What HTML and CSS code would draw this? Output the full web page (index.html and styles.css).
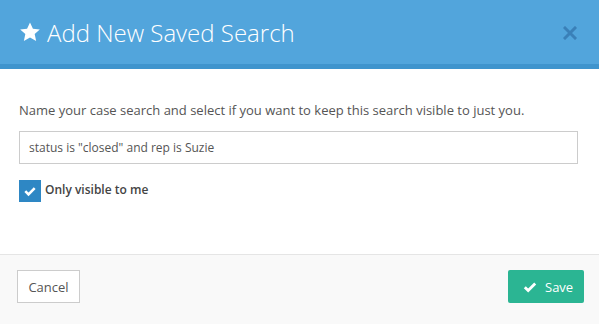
FILE: index.html
```html
<!DOCTYPE html>
<html>
<head>
<meta charset="utf-8">
<link rel="stylesheet" href="styles.css">
</head>
<body>
<div class="modal">
  <div class="header">
    <div class="title">
      <svg class="star" viewBox="0 0 24 24" width="22" height="22"><path fill="#fff" d="M12 1.5l3.2 6.9 7.5.8-5.6 5.1 1.6 7.4L12 17.9l-6.7 3.8 1.6-7.4-5.6-5.1 7.5-.8z"/></svg>
      <span>Add New Saved Search</span>
    </div>
    <svg class="close" viewBox="0 0 14 14" width="14" height="14"><path d="M2 2l10 10M12 2L2 12" stroke="#3a80b8" stroke-width="3" stroke-linecap="square"/></svg>
  </div>
  <div class="body">
    <p class="desc">Name your case search and select if you want to keep this search visible to just you.</p>
    <div class="input">status is "closed" and rep is Suzie</div>
    <label class="check">
      <span class="box"><svg viewBox="0 0 14 14" width="14" height="14"><path d="M2.3 7.2l3.2 3.2 6.2-6.2" fill="none" stroke="#fff" stroke-width="2.6"/></svg></span>
      <span class="lbl">Only visible to me</span>
    </label>
  </div>
  <div class="footer">
    <button class="btn cancel">Cancel</button>
    <button class="btn save"><svg viewBox="0 0 14 14" width="14" height="14"><path d="M1.8 7.2l3.4 3.4 7-7" fill="none" stroke="#fff" stroke-width="2.8"/></svg>Save</button>
  </div>
</div>
</body>
</html>
```
FILE: styles.css
```css
* { box-sizing: border-box; }
html, body { margin: 0; padding: 0; }
body {
  width: 599px;
  height: 324px;
  background: #fff;
  font-family: "Open Sans", "Liberation Sans", sans-serif;
  overflow: hidden;
}
.modal { display: flex; flex-direction: column; height: 324px; }
.header {
  height: 69px;
  background: #52a5dc;
  border-bottom: 5px solid #3f94cd;
  display: flex;
  align-items: center;
  justify-content: space-between;
  padding: 0 22px 0 19px;
}
.title {
  display: flex;
  align-items: center;
  color: #fff;
  font-size: 24px;
  font-weight: 300;
}
.star { margin-right: 6px; margin-top: -1px; }
.close { margin-top: 1px; }
.body {
  padding: 0 21px 0 19px;
  height: 185px;
}
.desc {
  margin: 32px 0 0;
  font-size: 13px;
  color: #555;
  line-height: 18px;
}
.input {
  margin-top: 12px;
  height: 33px;
  border: 1px solid #ccc;
  font-size: 12px;
  color: #555;
  padding: 0 9px;
  line-height: 31px;
}
.check {
  display: flex;
  align-items: center;
  margin-top: 16px;
}
.box {
  width: 22px;
  height: 22px;
  background: #2e87c4;
  display: flex;
  align-items: center;
  justify-content: center;
  margin-right: 4px;
}
.lbl {
  font-size: 12px;
  font-weight: 600;
  color: #444;
  margin-top: -3px;
}
.footer {
  flex: 1;
  background: #f9f9f9;
  border-top: 1px solid #e5e5e5;
  display: flex;
  justify-content: space-between;
  align-items: flex-start;
  padding: 15px 15px 0 17px;
}
.btn {
  height: 33px;
  font-family: "Open Sans", "Liberation Sans", sans-serif;
  font-size: 13px;
  border-radius: 0;
  display: flex;
  align-items: center;
  cursor: pointer;
}
.cancel {
  width: 63px;
  background: #fff;
  border: 1px solid #ccc;
  color: #555;
  justify-content: center;
  padding: 0;
}
.save {
  width: 76px;
  background: #2bb593;
  border: none;
  border-radius: 2px;
  color: #fff;
  padding: 0 0 0 15px;
}
.save svg { margin-right: 8px; }
```
